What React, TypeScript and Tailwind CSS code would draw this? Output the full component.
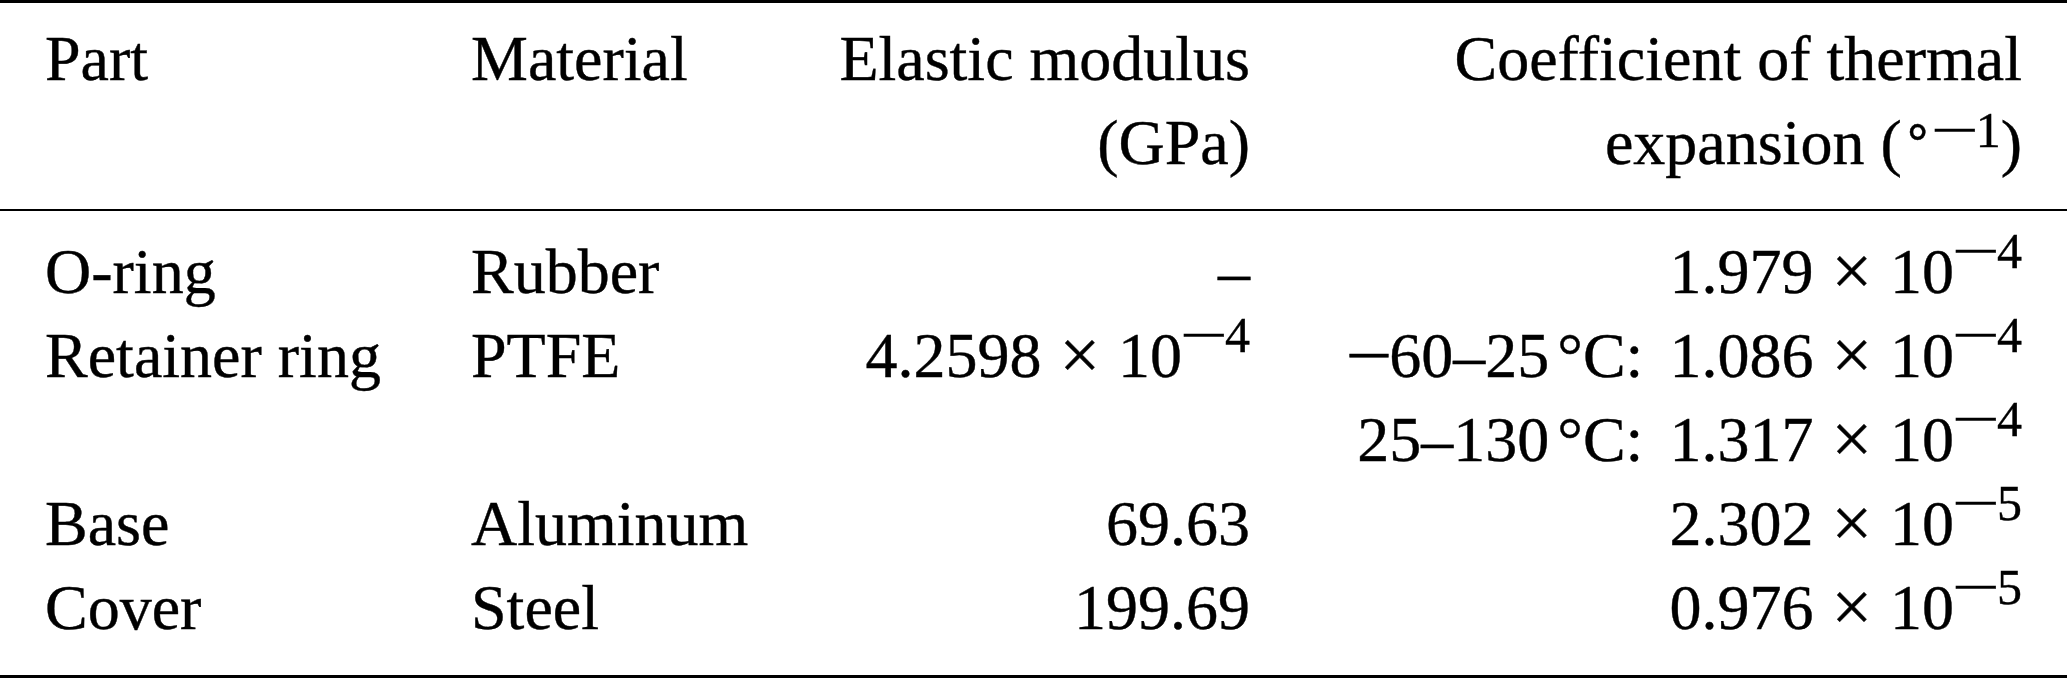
import React from "react";

const SupMinus = () => (
  <span className="inline-block w-[43px] text-center scale-x-[1.7]">−</span>
);

const Sup = ({ children, raise = "body" }: { children: React.ReactNode; raise?: "body" | "head" }) => (
  <span
    className={
      raise === "body"
        ? "text-[50px] leading-[0] align-[25px]"
        : "text-[50px] leading-[0] align-[17px]"
    }
  >
    {children}
  </span>
);

const Sci = ({ m, e }: { m: string; e: string }) => (
  <span className="whitespace-nowrap">
    {m}
    <span className="mx-[18px] text-[72px] leading-[0] align-[-2px]">×</span>
    10
    <Sup>
      <SupMinus />
      {e}
    </Sup>
  </span>
);

export default function App() {
  return (
    <div className="w-[2067px] h-[678px] bg-white text-black font-['Liberation_Serif','Times_New_Roman',serif] text-[64px] leading-[84px] [-webkit-text-stroke:0.4px_black]">
      <div className="border-t-[3px] border-b-[2px] border-black pt-[14px] pb-[24px] px-[45px] grid grid-cols-[426px_300px_479px_1fr]">
        <div>Part</div>
        <div>Material</div>
        <div className="text-right">
          <div>Elastic modulus</div>
          <div>(GPa)</div>
        </div>
        <div className="text-right">
          <div>Coefficient of thermal</div>
          <div className="whitespace-nowrap">
            expansion (
            <Sup raise="head">
              ∘<SupMinus />1
            </Sup>
            )
          </div>
        </div>
      </div>
      <div className="border-b-[3px] border-black pt-[19px] pb-[25px] px-[45px] grid grid-cols-[426px_300px_479px_1fr]">
        <div>O-ring</div>
        <div>Rubber</div>
        <div className="text-right">–</div>
        <div className="text-right">
          <Sci m="1.979" e="4" />
        </div>

        <div>Retainer ring</div>
        <div>PTFE</div>
        <div className="text-right">
          <Sci m="4.2598" e="4" />
        </div>
        <div className="text-right">
          <div className="whitespace-nowrap">
            <span className="inline-block w-[40px] text-center scale-x-[1.3]">−</span>
            60–25<span className="ml-[8px]">°C:</span>
            <span className="ml-[26px]">
              <Sci m="1.086" e="4" />
            </span>
          </div>
          <div className="whitespace-nowrap">
            25–130<span className="ml-[8px]">°C:</span>
            <span className="ml-[26px]">
              <Sci m="1.317" e="4" />
            </span>
          </div>
        </div>

        <div>Base</div>
        <div>Aluminum</div>
        <div className="text-right">69.63</div>
        <div className="text-right">
          <Sci m="2.302" e="5" />
        </div>

        <div>Cover</div>
        <div>Steel</div>
        <div className="text-right">199.69</div>
        <div className="text-right">
          <Sci m="0.976" e="5" />
        </div>
      </div>
    </div>
  );
}
